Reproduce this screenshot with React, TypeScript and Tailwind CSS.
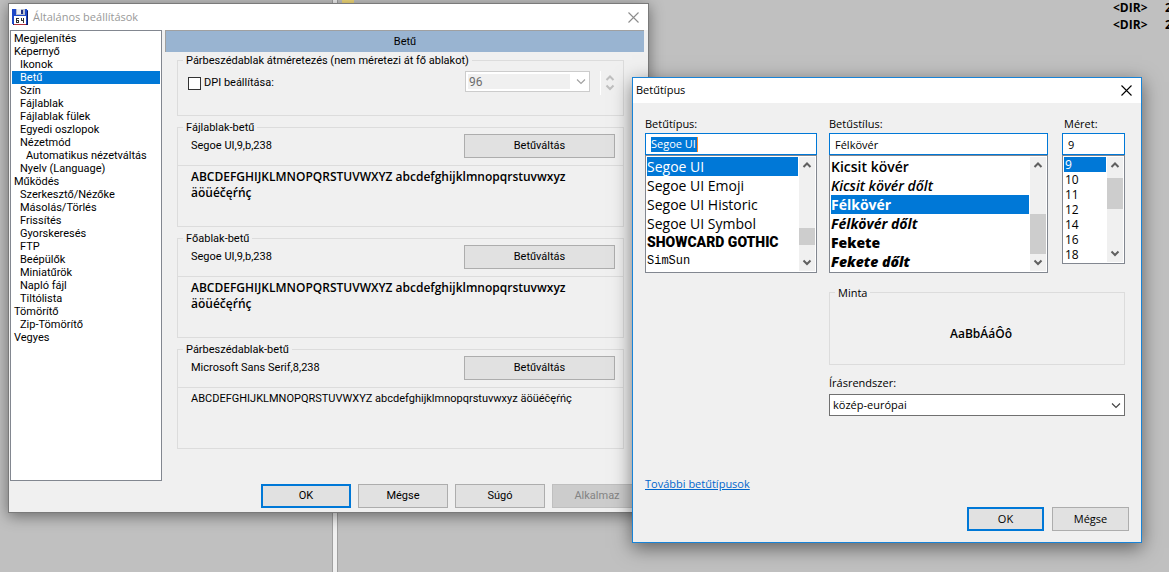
import { useState } from "react";
import type { ReactNode } from "react";

const ui = "font-['Open_Sans','Noto_Sans',sans-serif]";
const classic = "font-['Roboto','Liberation_Sans',sans-serif]";

type TreeItem = { label: string; level: 0 | 1 | 2 };

const pages: TreeItem[] = [
  { label: "Megjelenítés", level: 0 },
  { label: "Képernyő", level: 0 },
  { label: "Ikonok", level: 1 },
  { label: "Betű", level: 1 },
  { label: "Szín", level: 1 },
  { label: "Fájlablak", level: 1 },
  { label: "Fájlablak fülek", level: 1 },
  { label: "Egyedi oszlopok", level: 1 },
  { label: "Nézetmód", level: 1 },
  { label: "Automatikus nézetváltás", level: 2 },
  { label: "Nyelv (Language)", level: 1 },
  { label: "Működés", level: 0 },
  { label: "Szerkesztő/Nézőke", level: 1 },
  { label: "Másolás/Törlés", level: 1 },
  { label: "Frissítés", level: 1 },
  { label: "Gyorskeresés", level: 1 },
  { label: "FTP", level: 1 },
  { label: "Beépülők", level: 1 },
  { label: "Miniatűrök", level: 1 },
  { label: "Napló fájl", level: 1 },
  { label: "Tiltólista", level: 1 },
  { label: "Tömörítő", level: 0 },
  { label: "Zip-Tömörítő", level: 1 },
  { label: "Vegyes", level: 0 },
];

const indent = { 0: "pl-[2px]", 1: "pl-2", 2: "pl-[14px]" };

function FloppyIcon() {
  return (
    <svg width="16" height="16" viewBox="0 0 16 16" shapeRendering="crispEdges" aria-hidden="true">
      <path d="M0 0h14l2 2v14H1l-1-1z" fill="#1f49c8" />
      <path d="M15 2h1v14H1v-1h14z" fill="#0a1a66" />
      <path d="M4 0h9v6H4z" fill="#b9c0cf" />
      <path d="M5 0h4v5H5z" fill="#eef0f6" />
      <path d="M9 1h2v4H9z" fill="#1b2f86" />
      <path d="M2 7h12v8H2z" fill="#ffffff" />
      <path d="M2 15h12v1H2z" fill="#b0303a" />
      <path d="M4 9h3v1H5v1h2v3H4zM5 12v1h1v-1zM9 9h1v2h1V9h1v5h-1v-2H9z" fill="#333333" fillRule="evenodd" />
    </svg>
  );
}

function CloseIcon() {
  return (
    <svg width="11" height="11" viewBox="0 0 11 11" fill="none" stroke="currentColor" aria-hidden="true">
      <path d="M.5.5l10 10M10.500.5l-10 10" strokeWidth="1.1" />
    </svg>
  );
}

function Chevron({ up = false, bold = false }: { up?: boolean; bold?: boolean }) {
  return (
    <svg width="10" height="7" viewBox="0 0 10 7" fill="none" stroke="currentColor" strokeWidth={bold ? 2 : 1.1} aria-hidden="true">
      <path d={bold ? (up ? "M1.500 5l3.500-3.500 3.500 3.500" : "M1.500 1.500l3.500 3.500 3.500-3.500") : up ? "M1 5.500l4-4 4 4" : "M1 1.500l4 4 4-4"} />
    </svg>
  );
}

function PushButton({ children, tone = "normal", className = "" }: { children: ReactNode; tone?: "normal" | "primary" | "disabled"; className?: string }) {
  const look = {
    normal: "border border-[#adadad] bg-[#e1e1e1] text-black",
    primary: "border-2 border-[#0078d7] bg-[#e1e1e1] text-black",
    disabled: "border border-[#bfbfbf] bg-[#cccccc] text-[#838383]",
  }[tone];
  return (
    <button type="button" disabled={tone === "disabled"} className={`flex shrink-0 items-center justify-center ${look} ${className}`}>
      {children}
    </button>
  );
}

function Group({ title, className = "", children }: { title: string; className?: string; children: ReactNode }) {
  return (
    <fieldset className={`min-w-0 border border-[#dcdcdc] ${className}`}>
      <legend className="ml-[5px] px-[3px] leading-[13px]">{title}</legend>
      {children}
    </fieldset>
  );
}

function FontGroup({ title, value, children }: { title: string; value: string; children: ReactNode }) {
  return (
    <Group title={title} className="h-[106px]">
      <div className="flex h-8 items-start justify-between border-b border-[#dcdcdc] pl-[13px] pr-2">
        <span className="pt-[5px] leading-[13px]">{value}</span>
        <PushButton className="h-6 w-[151px]">Betűváltás</PushButton>
      </div>
      <div className="pl-[13px] pt-[3px]">{children}</div>
    </Group>
  );
}

function BoldSample() {
  return (
    <p className={`${ui} text-xs font-semibold leading-4`}>
      ABCDEFGHIJKLMNOPQRSTUVWXYZ abcdefghijklmnopqrstuvwxyz
      <br />
      äöüéčęŕńç
    </p>
  );
}

function SettingsWindow() {
  const [page, setPage] = useState("Betű");
  return (
    <section
      aria-label="Általános beállítások"
      className={`absolute left-2 top-[3px] flex h-[510px] w-[641px] flex-col border border-[#7a7a7a] bg-[#f0f0f0] text-[11px] text-black shadow-[0_3px_14px_rgba(0,0,0,0.45)] ${classic}`}
    >
      <header className="flex h-[26px] shrink-0 items-center bg-white pl-[3px] pr-[9px]">
        <FloppyIcon />
        <h1 className={`ml-[5px] flex-1 text-[#999999] ${ui}`}>Általános beállítások</h1>
        <button type="button" aria-label="Bezárás" className="text-[#8c8c8c]">
          <CloseIcon />
        </button>
      </header>
      <div className="flex min-h-0 flex-1 pl-px">
        <ul className="mb-[31px] w-[152px] shrink-0 border border-[#828790] bg-white p-px">
          {pages.map((item) => (
            <li key={item.label}>
              <button
                type="button"
                onClick={() => setPage(item.label)}
                className={`block h-[13px] w-full whitespace-nowrap text-left leading-[13px] ${indent[item.level]} ${page === item.label ? "bg-[#0078d7] text-white" : ""}`}
              >
                {item.label}
              </button>
            </li>
          ))}
        </ul>
        <div className="ml-[3px] mr-1 flex min-w-0 flex-1 flex-col">
          <h2 className="flex h-[22px] items-center justify-center border-l border-t border-[#a0a0a0] bg-[#99b4d1] pt-px">Betű</h2>
          <div className="flex flex-col gap-[5px] pl-3 pr-5 pt-[2px]">
            <Group title="Párbeszédablak átméretezés (nem méretezi át fő ablakot)" className="h-[62px]">
              <div className="flex items-start pl-[10px] pr-2 pt-1">
                <label className="flex h-6 flex-1 items-center gap-[3px]">
                  <input type="checkbox" className="size-[13px] appearance-none border border-[#333333] bg-white" />
                  DPI beállítása:
                </label>
                <div className="flex h-[21px] w-[125px] items-center border border-[#cccccc] bg-white p-[2px] text-xs text-[#6d6d6d]">
                  <input aria-label="DPI" disabled defaultValue="96" className="h-full w-[102px] bg-[#f0f0f0] pl-px" />
                  <span className="ml-[6px] text-[#a0a0a0]">
                    <Chevron />
                  </span>
                </div>
                <div className="ml-[10px] flex h-6 flex-col justify-between border-l border-white py-1 pl-1 text-[#bfbfbf]">
                  <button type="button" disabled aria-label="Növelés">
                    <Chevron up bold />
                  </button>
                  <button type="button" disabled aria-label="Csökkentés">
                    <Chevron bold />
                  </button>
                </div>
              </div>
            </Group>
            <FontGroup title="Fájlablak-betű" value="Segoe UI,9,b,238">
              <BoldSample />
            </FontGroup>
            <FontGroup title="Főablak-betű" value="Segoe UI,9,b,238">
              <BoldSample />
            </FontGroup>
            <FontGroup title="Párbeszédablak-betű" value="Microsoft Sans Serif,8,238">
              <p className="leading-4">ABCDEFGHIJKLMNOPQRSTUVWXYZ abcdefghijklmnopqrstuvwxyz äöüéčęŕńç</p>
            </FontGroup>
          </div>
          <footer className="-mr-1 mb-1 mt-auto flex justify-end gap-[7px] pr-[6px]">
            <PushButton tone="primary" className="h-6 w-[90px]">OK</PushButton>
            <PushButton className="h-6 w-[90px]">Mégse</PushButton>
            <PushButton className="h-6 w-[90px]">Súgó</PushButton>
            <PushButton tone="disabled" className="h-6 w-[90px]">Alkalmaz</PushButton>
          </footer>
        </div>
      </div>
    </section>
  );
}

type Choice = { label: string; face: string };

const families: Choice[] = [
  { label: "Segoe UI", face: "text-sm" },
  { label: "Segoe UI Emoji", face: "text-sm" },
  { label: "Segoe UI Historic", face: "text-sm" },
  { label: "Segoe UI Symbol", face: "text-sm" },
  { label: "SHOWCARD GOTHIC", face: "text-sm font-['Roboto',sans-serif] font-black" },
  { label: "SimSun", face: "text-xs font-['Liberation_Mono',monospace]" },
];

const styles: Choice[] = [
  { label: "Kicsit kövér", face: "text-sm font-semibold" },
  { label: "Kicsit kövér dőlt", face: "text-sm font-semibold italic" },
  { label: "Félkövér", face: "text-sm font-bold" },
  { label: "Félkövér dőlt", face: "text-sm font-bold italic" },
  { label: "Fekete", face: "text-sm font-extrabold" },
  { label: "Fekete dőlt", face: "text-sm font-extrabold italic" },
];

const sizes: Choice[] = ["9", "10", "11", "12", "14", "16", "18"].map((label) => ({ label, face: "text-xs" }));

function PickerList({ name, items, selected, onSelect, rowClass, thumbClass }: { name: string; items: Choice[]; selected: string; onSelect: (value: string) => void; rowClass: string; thumbClass: string }) {
  return (
    <div className="flex border border-[#828790] bg-white p-px">
      <ul role="listbox" aria-label={name} className="min-w-0 flex-1">
        {items.map((item) => (
          <li
            key={item.label}
            role="option"
            aria-selected={item.label === selected}
            onClick={() => onSelect(item.label)}
            className={`cursor-default whitespace-nowrap ${rowClass} ${item.face} ${item.label === selected ? "bg-[#0078d7] text-white" : ""}`}
          >
            {item.label}
          </li>
        ))}
      </ul>
      <div className="ml-px flex w-4 shrink-0 flex-col items-center bg-[#f0f0f0] text-[#606060]">
        <button type="button" aria-label="Fel" className="flex h-[17px] items-center">
          <Chevron up bold />
        </button>
        <div className="flex w-full flex-1 flex-col">
          <div className={`w-full bg-[#cdcdcd] ${thumbClass}`} />
        </div>
        <button type="button" aria-label="Le" className="flex h-[17px] items-center">
          <Chevron bold />
        </button>
      </div>
    </div>
  );
}

const field = "h-[22px] w-full border border-[#0078d7] bg-white pl-[5px] outline-none";

function FontWindow() {
  const [family, setFamily] = useState("Segoe UI");
  const [style, setStyle] = useState("Félkövér");
  const [size, setSize] = useState("9");
  return (
    <section
      aria-label="Betűtípus"
      className={`absolute left-[632px] top-[77px] flex h-[466px] w-[510px] flex-col border border-[#1883d7] bg-[#f0f0f0] text-[11px] text-black shadow-[0_5px_18px_rgba(0,0,0,0.5)] ${ui}`}
    >
      <header className="flex h-[25px] shrink-0 items-center justify-between bg-white pl-[3px] pr-[9px]">
        <h1>Betűtípus</h1>
        <button type="button" aria-label="Bezárás">
          <CloseIcon />
        </button>
      </header>
      <div className="grid grid-cols-[172px_219px_63px] items-start gap-x-3 pl-3 pr-4 pt-3">
        <div>
          <label htmlFor="family" className="block leading-[18px]">Betűtípus:</label>
          <div className="flex h-[22px] items-center border border-[#0078d7] bg-white pl-[5px]">
            <input id="family" value={family} onChange={(e) => setFamily(e.target.value)} className="h-[15px] w-[47px] border-r border-[#ff8728] bg-[#0078d7] text-white outline-none" />
          </div>
          <PickerList name="Betűtípus" items={families} selected={family} onSelect={setFamily} rowClass="h-[19px] leading-[19px]" thumbClass="mt-auto mb-[9px] h-[17px]" />
        </div>
        <div>
          <label htmlFor="style" className="block leading-[18px]">Betűstílus:</label>
          <input id="style" value={style} onChange={(e) => setStyle(e.target.value)} className={field} />
          <PickerList name="Betűstílus" items={styles} selected={style} onSelect={setStyle} rowClass="h-[19px] leading-[19px]" thumbClass="mt-auto h-10" />
        </div>
        <div className="ml-[2px] w-[63px]">
          <label htmlFor="size" className="block pl-[2px] leading-[18px]">Méret:</label>
          <input id="size" value={size} onChange={(e) => setSize(e.target.value)} className={field} />
          <PickerList name="Méret" items={sizes} selected={size} onSelect={setSize} rowClass="h-[15px] pl-px leading-[15px]" thumbClass="mt-1 h-[31px]" />
        </div>
      </div>
      <div className="ml-[196px] mr-4 mt-[13px]">
        <Group title="Minta" className="h-[79px]">
          <p className="pl-2 pt-[27px] text-center text-xs font-semibold leading-4">AaBbÁáÔô</p>
        </Group>
        <label htmlFor="script" className="mt-[9px] block leading-[18px]">Írásrendszer:</label>
        <div className="relative mt-[2px]">
          <select id="script" className="h-[22px] w-full appearance-none border border-[#707070] bg-white pl-[3px] pr-5">
            <option>közép-európai</option>
          </select>
          <span className="pointer-events-none absolute right-1 top-2 text-[#404040]">
            <Chevron />
          </span>
        </div>
      </div>
      <a href="#fonts" className="ml-3 mt-[59px] self-start leading-[18px] text-[#0066cc] underline">További betűtípusok</a>
      <footer className="mb-[11px] mt-auto flex justify-end gap-2 pr-3">
        <PushButton tone="primary" className="h-6 w-[77px]">OK</PushButton>
        <PushButton className="h-6 w-[77px]">Mégse</PushButton>
      </footer>
    </section>
  );
}

export default function App() {
  return (
    <main className={`relative flex h-screen min-h-[560px] overflow-hidden bg-[#c0c0c0] text-black ${ui}`}>
      <div className="w-[333px] shrink-0 border-r border-[#a0a0a0]" />
      <div className="w-1 shrink-0 bg-[#f0f0f0]" />
      <div className="min-w-0 flex-1 overflow-hidden border-l border-[#a0a0a0] text-xs font-bold leading-[17px]">
        <div className="-mt-px flex whitespace-nowrap">
          <span className="ml-1 mr-[6px] h-4 w-3 bg-[#f0d878]" />
          <span className="flex-1">[TORRENT]</span>
          <span className="w-[52px] shrink-0">&lt;DIR&gt;</span>
          <span className="w-1 shrink-0">2</span>
        </div>
        <div className="flex justify-end whitespace-nowrap">
          <span className="w-[52px] shrink-0">&lt;DIR&gt;</span>
          <span className="w-1 shrink-0">2</span>
        </div>
      </div>
      <SettingsWindow />
      <FontWindow />
    </main>
  );
}
